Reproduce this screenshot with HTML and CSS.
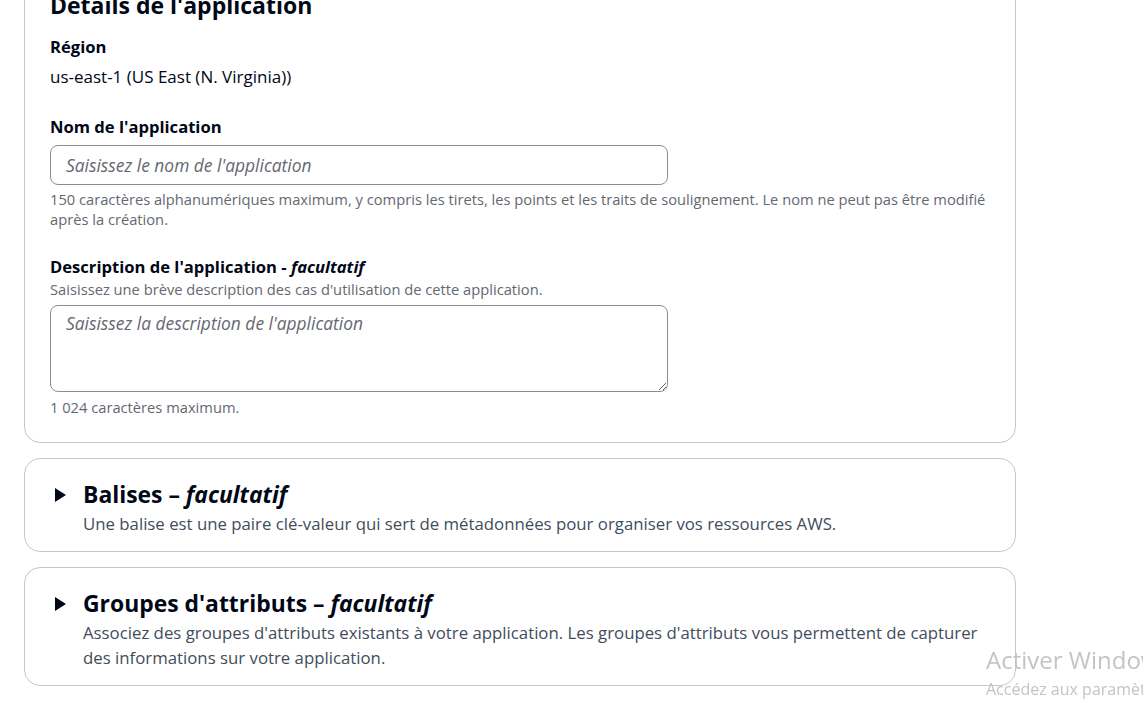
FILE: index.html
```html
<!DOCTYPE html>
<html lang="fr">
<head>
<meta charset="utf-8">
<title>Détails de l'application</title>
<link rel="stylesheet" href="styles.css">
</head>
<body>
<main class="page">
  <section class="card details">
    <h2 class="card-title">Détails de l'application</h2>
    <div class="field">
      <div class="label">Région</div>
      <div class="value">us-east-1 (US East (N. Virginia))</div>
    </div>
    <div class="field field-gap">
      <label class="label" for="app-name">Nom de l'application</label>
      <input id="app-name" class="input" type="text" placeholder="Saisissez le nom de l'application">
      <div class="hint">150 caractères alphanumériques maximum, y compris les tirets, les points et les traits de soulignement. Le nom ne peut pas être modifié après la création.</div>
    </div>
    <div class="field field-gap field-desc">
      <label class="label" for="app-desc">Description de l'application - <i>facultatif</i></label>
      <div class="sub">Saisissez une brève description des cas d'utilisation de cette application.</div>
      <textarea id="app-desc" class="textarea" placeholder="Saisissez la description de l'application"></textarea>
      <div class="hint">1 024 caractères maximum.</div>
    </div>
  </section>

  <section class="card expand">
    <span class="caret"></span>
    <div class="expand-body">
      <h3 class="expand-title">Balises – <i>facultatif</i></h3>
      <p class="expand-desc">Une balise est une paire clé-valeur qui sert de métadonnées pour organiser vos ressources AWS.</p>
    </div>
  </section>

  <section class="card expand">
    <span class="caret"></span>
    <div class="expand-body">
      <h3 class="expand-title">Groupes d'attributs – <i>facultatif</i></h3>
      <p class="expand-desc">Associez des groupes d'attributs existants à votre application. Les groupes d'attributs vous permettent de capturer des informations sur votre application.</p>
    </div>
  </section>
</main>

<div class="watermark">
  <div class="wm-title">Activer Windows</div>
  <div class="wm-sub">Accédez aux paramètres pour activer Windows.</div>
</div>
</body>
</html>
```

FILE: styles.css
```css
html, body {
  margin: 0;
  padding: 0;
  background: #ffffff;
  overflow: hidden;
}

body {
  font-family: "Open Sans", "Noto Sans", Arial, sans-serif;
  color: #000716;
}

.page {
  width: 992px;
  margin: -28px 0 0 24px;
  display: flex;
  flex-direction: column;
  gap: 15px;
}

.card {
  border: 1px solid #c6c6cd;
  border-radius: 16px;
  background: #ffffff;
}

.details {
  padding: 20px 24px 25px 25px;
}

.card-title {
  margin: 0 0 19px;
  font-size: 23px;
  line-height: 24px;
  font-weight: 700;
}

.field {
  display: flex;
  flex-direction: column;
}

.field-gap {
  margin-top: 28px;
}

.field-desc {
  margin-top: 27px;
}

.label {
  font-size: 16.6px;
  line-height: 22px;
  font-weight: 700;
}

.label i {
  font-weight: 700;
}

.value {
  margin-top: 8px;
  font-size: 17px;
  line-height: 22px;
}

.input {
  margin-top: 7px;
  width: 618px;
  height: 40px;
  box-sizing: border-box;
  border: 1px solid #8c8c94;
  border-radius: 8px;
  padding: 0 15px;
  font-family: inherit;
  font-size: 17.4px;
  color: #000716;
  outline: none;
}

.textarea {
  margin-top: 6px;
  width: 618px;
  height: 87px;
  box-sizing: border-box;
  border: 1px solid #8c8c94;
  border-radius: 8px;
  padding: 5px 15px;
  font-family: inherit;
  font-size: 17.4px;
  line-height: 24px;
  color: #000716;
  outline: none;
  resize: vertical;
}

.input::placeholder,
.textarea::placeholder {
  font-style: italic;
  color: #656871;
}

.hint {
  margin-top: 4px;
  font-size: 14.7px;
  line-height: 20px;
  color: #656871;
}

.textarea + .hint {
  margin-top: 5px;
}

.sub {
  margin-top: 1px;
  font-size: 14.7px;
  line-height: 20px;
  color: #656871;
}

.expand {
  display: flex;
  align-items: flex-start;
  padding: 21px 26px 15px 30px;
}

.caret {
  flex: none;
  width: 0;
  height: 0;
  margin-top: 8px;
  border-top: 7px solid transparent;
  border-bottom: 7px solid transparent;
  border-left: 11px solid #000716;
}

.expand-body {
  margin-left: 17px;
}

.expand-title {
  margin: 0;
  font-size: 22.9px;
  line-height: 30px;
  font-weight: 700;
}

.expand-desc {
  margin: 1px 0 0;
  font-size: 16.8px;
  line-height: 25px;
  color: #414d5c;
}

.watermark {
  position: fixed;
  left: 986px;
  top: 644px;
  white-space: nowrap;
  color: #c4c4c4;
  font-family: "Open Sans", "Noto Sans", sans-serif;
  pointer-events: none;
}

.wm-title {
  font-size: 24px;
  line-height: 32px;
  font-weight: 400;
}

.wm-sub {
  font-size: 16px;
  line-height: 22px;
  margin-top: 2px;
}
```
